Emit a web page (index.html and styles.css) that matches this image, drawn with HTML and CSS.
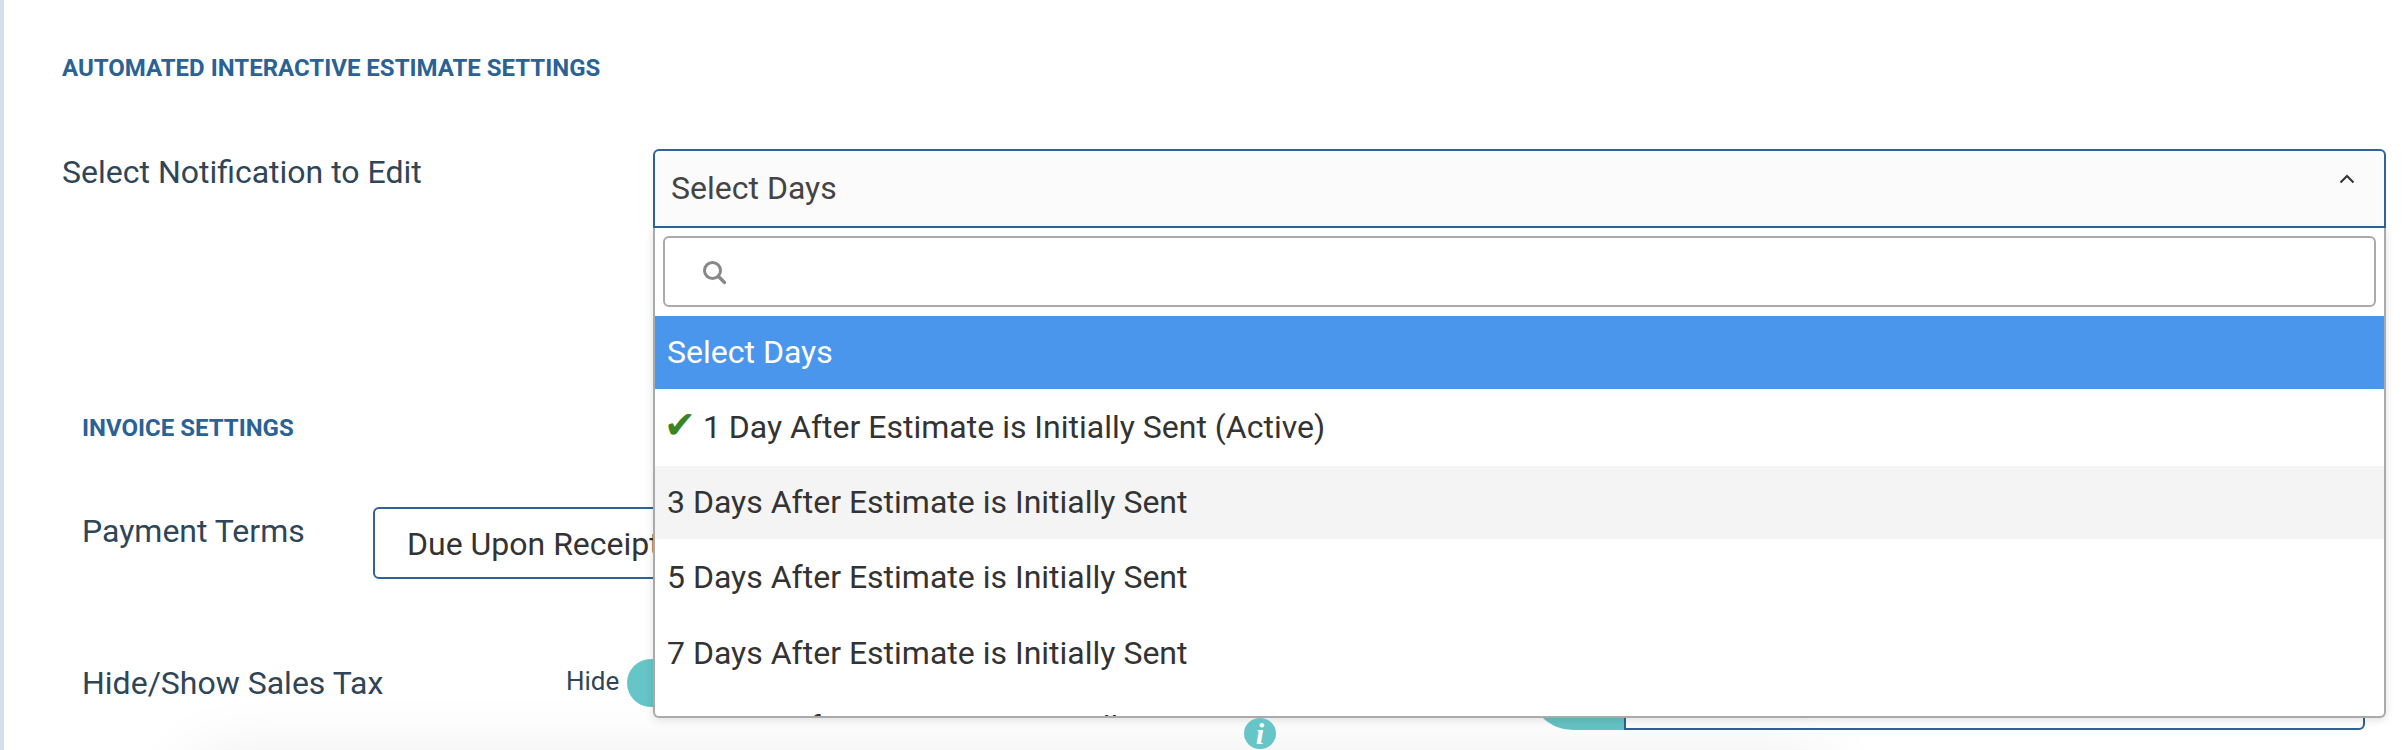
FILE: index.html
```html
<!DOCTYPE html>
<html lang="en">
<head>
<meta charset="utf-8">
<title>Automated Interactive Estimate Settings</title>
<link rel="stylesheet" href="styles.css">
</head>
<body>
<main class="page">
  <h2 class="section-title">AUTOMATED INTERACTIVE ESTIMATE SETTINGS</h2>
  <div class="notify-row">
    <label class="field-label">Select Notification to Edit</label>
    <div class="select-wrap">
      <div class="select-trigger">
        <span>Select Days</span>
        <svg class="chevron" width="16" height="10" viewBox="0 0 16 10"><path d="M1.5 8.5 8 2l6.5 6.5" fill="none" stroke="#333" stroke-width="2"/></svg>
      </div>
      <div class="menu">
        <div class="menu-search">
          <div class="search-box">
            <svg width="26" height="26" viewBox="0 0 26 26"><circle cx="11.5" cy="11.5" r="8" fill="none" stroke="#888" stroke-width="3"/><path d="m17.5 17.5 6 6" stroke="#888" stroke-width="3.4" stroke-linecap="round"/></svg>
          </div>
        </div>
        <ul class="options">
          <li class="option selected">Select Days</li>
          <li class="option"><span class="tick">✔</span> 1 Day After Estimate is Initially Sent (Active)</li>
          <li class="option hover">3 Days After Estimate is Initially Sent</li>
          <li class="option">5 Days After Estimate is Initially Sent</li>
          <li class="option">7 Days After Estimate is Initially Sent</li>
          <li class="option">10 Days After Estimate is Initially Sent</li>
        </ul>
      </div>
    </div>
  </div>
  <section class="invoice">
    <h3 class="sub-title">INVOICE SETTINGS</h3>
    <div class="terms-row">
      <label class="field-label">Payment Terms</label>
      <div class="terms-select">Due Upon Receipt</div>
    </div>
    <div class="tax-row">
      <label class="field-label">Hide/Show Sales Tax</label>
      <div class="toggle-group">
        <span class="toggle-text">Hide</span>
        <span class="toggle"></span>
      </div>
      <div class="addon-group">
        <span class="addon"></span>
        <span class="addon-input"></span>
      </div>
    </div>
  </section>
</main>
<span class="info">i</span>
<div class="footer-glow"></div>
</body>
</html>
```
FILE: styles.css
```css
* { box-sizing: border-box; }
html, body { margin: 0; height: 750px; overflow: hidden; background: #fff; }
body { position: relative; font-family: Roboto, "Liberation Sans", sans-serif; color: #2f4558; }
.page { height: 750px; border-left: 4px solid #d5dfeb; padding: 56px 18px 0 58px; overflow: hidden; }
.section-title { margin: 0; font-size: 24px; line-height: 24px; font-weight: 700; color: #2b6296; }
.notify-row { display: flex; margin-top: 69px; }
.field-label { font-size: 32px; line-height: 40px; color: #2f4558; }
.notify-row .field-label { width: 591px; flex: none; padding-top: 3px; }
.select-wrap { position: relative; flex: 1; z-index: 2; }
.select-trigger { height: 79px; display: flex; align-items: center; justify-content: space-between; padding: 0 29px 2px 16px; background: #fbfbfb; border: 2px solid #2d6397; border-radius: 6px 6px 0 0; font-size: 32px; color: #444; }
.chevron { margin-top: -18px; }
.menu { position: absolute; left: 0; right: 0; top: 79px; height: 490px; background: #fff; border: 2px solid #aaa; border-top: 0; border-radius: 0 0 6px 6px; box-shadow: 0 2px 8px rgba(0,0,0,.12); overflow: hidden; }
.menu-search { padding: 8px 8px 9px; }
.search-box { height: 71px; border: 2px solid #aaa; border-radius: 6px; padding: 21px 0 0 36px; }
.options { list-style: none; margin: 0; padding: 0; }
.option { height: 76.5px; line-height: 76.5px; padding-left: 12px; font-size: 32px; color: #333; white-space: nowrap; }
.option.selected { background: #4a96ec; color: #fff; height: 73px; line-height: 73px; }
.option.hover { background: #f4f4f4; height: 73px; line-height: 73px; }
.option:last-child { line-height: 71px; }
.tick { display: inline-block; width: 31px; margin-left: -3px; font-size: 38px; line-height: 1; color: #3a8522; }
.invoice { margin-top: 188px; padding-left: 20px; }
.sub-title { margin: 0; font-size: 24px; line-height: 24px; font-weight: 700; color: #2b6296; }
.terms-row { display: flex; margin-top: 67px; }
.terms-row .field-label { width: 291px; flex: none; padding-top: 4px; }
.terms-select { width: 700px; height: 72px; border: 2px solid #2d6397; border-radius: 6px; padding-left: 32px; font-size: 32px; line-height: 70px; color: #333; }
.tax-row { display: flex; margin-top: 80px; }
.tax-row .field-label { width: 484px; flex: none; padding-top: 4px; }
.toggle-group { display: flex; align-items: flex-start; gap: 8px; width: 963px; flex: none; }
.toggle-text { font-size: 26px; line-height: 44px; color: #2f4558; }
.toggle { width: 100px; height: 48px; border-radius: 24px; background: #66c5c6; }
.addon-group { display: flex; align-items: flex-end; width: 836px; flex: none; margin-top: -17px; }
.addon { width: 95px; height: 88px; border-radius: 44px 0 0 44px; background: #66c5c6; }
.addon-input { flex: 1; height: 72px; background: #fff; border: 2px solid #2d6397; border-radius: 0 6px 6px 0; }
.info { position: absolute; left: 1244px; top: 718px; width: 32px; height: 31px; border-radius: 50%; background: #66c5c6; color: #fff; font: italic 700 30px/31px "Liberation Serif", serif; text-align: center; z-index: 3; }
.footer-glow { position: absolute; left: 220px; width: 1580px; top: 785px; height: 60px; box-shadow: 0 0 70px 25px rgba(0,0,0,.09); background: #eee; z-index: 1; }
```
